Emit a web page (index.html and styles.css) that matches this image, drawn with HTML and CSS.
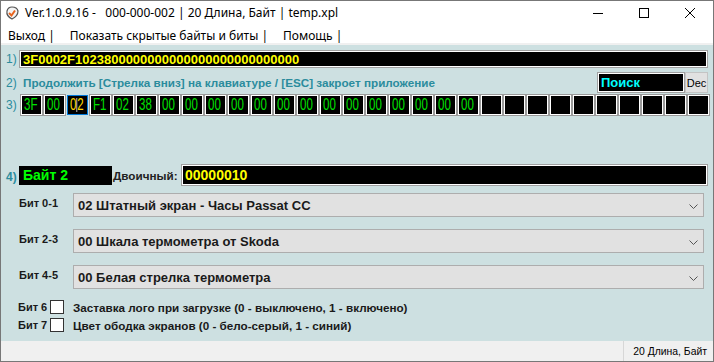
FILE: index.html
```html
<!DOCTYPE html>
<html lang="ru">
<head>
  <meta charset="UTF-8" />
  <title>temp.xpl</title>
  <link rel="stylesheet" href="styles.css">
</head>
<body>
  <div class="window">
    <div class="titlebar">
      <svg class="app-icon" width="16" height="16" viewBox="0 0 16 16">
        <path d="M3 6 Q4 2 8 2 Q13 2 14 6 Q14 11 8 14 Q2 11 3 6 Z" fill="#f4f4f4" stroke="#555" stroke-width="1.2"/>
        <path d="M5 8 L7.5 10.5 L11 5.5" fill="none" stroke="#e8641e" stroke-width="2"/>
      </svg>
      <span class="title">Ver.1.0.9.16 - &nbsp; 000-000-002 | 20 Длина, Байт | temp.xpl</span>
      <div class="controls">
        <span class="ctl"><svg width="10" height="10" viewBox="0 0 10 10"><path d="M0 5.5 H10" stroke="#000" stroke-width="1"/></svg></span>
        <span class="ctl"><svg width="10" height="10" viewBox="0 0 10 10"><rect x="0.5" y="0.5" width="9" height="9" fill="none" stroke="#000" stroke-width="1"/></svg></span>
        <span class="ctl"><svg width="10" height="10" viewBox="0 0 10 10"><path d="M0 0 L10 10 M10 0 L0 10" stroke="#000" stroke-width="1"/></svg></span>
      </div>
    </div>

    <div class="menubar">
      <span>Выход |</span>
      <span>Показать скрытые байты и биты |</span>
      <span>Помощь |</span>
    </div>

    <div class="client">
      <div class="row row-hex">
        <span class="num">1)</span>
        <div class="field hex">3F0002F1023800000000000000000000000000</div>
      </div>

      <div class="row row-hint">
        <span class="num">2)</span>
        <span class="hint">Продолжить [Стрелка вниз] на клавиатуре / [ESC] закроет приложение</span>
        <div class="field search">Поиск</div>
        <div class="dec">Dec</div>
      </div>

      <div class="row row-cells">
        <span class="num">3)</span>
        <div class="cells">
          <div class="cell"><span>3F</span></div><div class="cell"><span>00</span></div><div class="cell active"><span>0<i class="caret"></i>2</span></div><div class="cell"><span>F1</span></div><div class="cell"><span>02</span></div>
          <div class="cell"><span>38</span></div><div class="cell"><span>00</span></div><div class="cell"><span>00</span></div><div class="cell"><span>00</span></div><div class="cell"><span>00</span></div>
          <div class="cell"><span>00</span></div><div class="cell"><span>00</span></div><div class="cell"><span>00</span></div><div class="cell"><span>00</span></div><div class="cell"><span>00</span></div>
          <div class="cell"><span>00</span></div><div class="cell"><span>00</span></div><div class="cell"><span>00</span></div><div class="cell"><span>00</span></div><div class="cell"><span>00</span></div>
          <div class="cell"></div><div class="cell"></div><div class="cell"></div><div class="cell"></div><div class="cell"></div>
          <div class="cell"></div><div class="cell"></div><div class="cell"></div><div class="cell"></div><div class="cell"></div>
        </div>
      </div>

      <div class="row row-byte">
        <span class="num num-byte">4)</span>
        <div class="byte">Байт 2</div>
        <span class="bin-label">Двоичный:</span>
        <div class="field binary">00000010</div>
      </div>

      <div class="row row-bits first">
        <span class="bit-label">Бит 0-1</span>
        <div class="select">02 Штатный экран - Часы Passat CC
          <svg class="chev" width="9" height="5" viewBox="0 0 9 5"><path d="M0.5 0.5 L4.5 4.5 L8.5 0.5" fill="none" stroke="#555" stroke-width="1"/></svg>
        </div>
      </div>

      <div class="row row-bits">
        <span class="bit-label">Бит 2-3</span>
        <div class="select">00 Шкала термометра от Skoda
          <svg class="chev" width="9" height="5" viewBox="0 0 9 5"><path d="M0.5 0.5 L4.5 4.5 L8.5 0.5" fill="none" stroke="#555" stroke-width="1"/></svg>
        </div>
      </div>

      <div class="row row-bits">
        <span class="bit-label">Бит 4-5</span>
        <div class="select">00 Белая стрелка термометра
          <svg class="chev" width="9" height="5" viewBox="0 0 9 5"><path d="M0.5 0.5 L4.5 4.5 L8.5 0.5" fill="none" stroke="#555" stroke-width="1"/></svg>
        </div>
      </div>

      <div class="row row-check first">
        <span class="check-label">Бит 6</span>
        <span class="checkbox"></span>
        <span class="check-text">Заставка лого при загрузке (0 - выключено, 1 - включено)</span>
      </div>

      <div class="row row-check">
        <span class="check-label">Бит 7</span>
        <span class="checkbox"></span>
        <span class="check-text">Цвет ободка экранов (0 - бело-серый, 1 - синий)</span>
      </div>
    </div>

    <div class="statusbar">
      <span class="status-cell">20 Длина, Байт</span>
    </div>
  </div>
</body>
</html>
```

FILE: styles.css
```css
* {
  box-sizing: border-box;
  margin: 0;
  padding: 0;
}
body {
  background-color: #ffffff;
  font-family: "Liberation Sans", Arial, sans-serif;
  overflow: hidden;
}
.window {
  width: 714px;
  height: 362px;
  border: 1px solid #777;
  display: flex;
  flex-direction: column;
  background-color: #fff;
}

/* Title bar */
.titlebar {
  height: 23px;
  display: flex;
  align-items: center;
  font-family: "Noto Sans", sans-serif;
  font-size: 12px;
  color: #000;
}
.app-icon {
  margin-left: 3px;
  margin-right: 5px;
}
.title {
  flex: 1;
  white-space: pre;
}
.controls {
  display: flex;
  height: 100%;
}
.ctl {
  width: 46px;
  display: flex;
  align-items: center;
  justify-content: center;
}

/* Menu */
.menubar {
  height: 21px;
  display: flex;
  align-items: center;
  gap: 15px;
  padding-left: 7px;
  padding-top: 3px;
  font-family: "Noto Sans", sans-serif;
  font-size: 12px;
  color: #000;
  border-bottom: 2px solid #f0f0f0;
}

/* Client area */
.client {
  flex: 1;
  background-color: #cde0e1;
  padding: 5px 4px 0 4px;
  display: flex;
  flex-direction: column;
}
.row {
  display: flex;
  align-items: center;
}
.num {
  width: 14px;
  padding-left: 1px;
  font-size: 12px;
  color: #2b8c9d;
}
.field {
  background-color: #000;
  border: 1px solid #a0a0a0;
  box-shadow: inset 0 0 0 1px #fff;
  font-weight: bold;
  display: flex;
  align-items: center;
}

.row-hex {
  height: 18px;
}
.hex {
  flex: 1;
  height: 18px;
  padding-left: 3px;
  font-size: 13px;
  color: #ffff00;
  margin-right: 1px;
}

.row-hint {
  height: 21px;
  margin-top: 4px;
}
.hint {
  flex: 1;
  padding-left: 4px;
  font-size: 11.7px;
  font-weight: bold;
  color: #2b8c9d;
}
.search {
  width: 88px;
  height: 21px;
  padding-left: 3px;
  font-size: 13px;
  color: #00ffff;
}
.dec {
  width: 23px;
  height: 21px;
  background-color: #e1e1e1;
  border: 1px solid #c4c4c4;
  font-size: 11px;
  color: #000;
  display: flex;
  align-items: center;
  justify-content: center;
  margin-right: 1px;
}

.row-cells {
  height: 20px;
  margin-top: 2px;
}
.cells {
  display: flex;
  gap: 2px;
  margin-left: 2px;
}
.cell {
  width: 21px;
  height: 20px;
  background-color: #000;
  border: 1px solid #fff;
  box-shadow: 0 0 0 1px #9a9a9a;
  color: #00e000;
  font-size: 16px;
  line-height: 18px;
  padding-left: 2px;
  white-space: nowrap;
  overflow: hidden;
}
.cell span {
  display: inline-block;
  transform: scaleX(0.72);
  transform-origin: left center;
}
.cell.active {
  border-color: #0078d7;
  box-shadow: none;
  color: #ffd800;
}
.caret {
  display: inline-block;
  width: 1px;
  height: 14px;
  background-color: #fff;
  vertical-align: -2px;
}

.row-byte {
  height: 22px;
  margin-top: 49px;
}
.num-byte {
  font-weight: bold;
  padding-top: 4px;
}
.byte {
  width: 93px;
  height: 19px;
  background-color: #000;
  color: #00ff00;
  font-size: 14px;
  font-weight: bold;
  padding-left: 4px;
  line-height: 18px;
}
.bin-label {
  width: 69px;
  padding-left: 1px;
  font-size: 11.7px;
  font-weight: bold;
  color: #222;
}
.binary {
  flex: 1;
  height: 22px;
  padding-left: 3px;
  font-size: 14px;
  color: #ffff00;
  margin-right: 1px;
}

.row-bits {
  height: 24px;
  margin-top: 12px;
}
.row-bits.first {
  margin-top: 7px;
}
.bit-label {
  width: 68px;
  padding-left: 14px;
  font-size: 11px;
  font-weight: bold;
  color: #1a1a1a;
  align-self: flex-start;
  padding-top: 4px;
}
.select {
  width: 631px;
  height: 24px;
  background-color: #e1e1e1;
  border: 1px solid #adadad;
  font-size: 13px;
  font-weight: bold;
  color: #1a1a1a;
  padding-left: 4px;
  display: flex;
  align-items: center;
  position: relative;
}
.chev {
  position: absolute;
  right: 5px;
  top: 10px;
}

.row-check {
  height: 16px;
  margin-top: 2px;
}
.row-check.first {
  margin-top: 10px;
}
.check-label {
  width: 45px;
  padding-left: 13px;
  font-size: 11px;
  font-weight: bold;
  color: #1a1a1a;
}
.checkbox {
  width: 14px;
  height: 14px;
  background-color: #fff;
  border: 1px solid #333;
}
.check-text {
  padding-left: 9px;
  font-size: 11.7px;
  font-weight: bold;
  color: #1a1a1a;
}

/* Status bar */
.statusbar {
  height: 20px;
  background-color: #f0f0f0;
  display: flex;
  justify-content: flex-end;
}
.status-cell {
  width: 90px;
  border-left: 1px solid #d7d7d7;
  font-size: 10.4px;
  color: #000;
  display: flex;
  align-items: center;
  justify-content: flex-end;
  padding-right: 6px;
}
```
